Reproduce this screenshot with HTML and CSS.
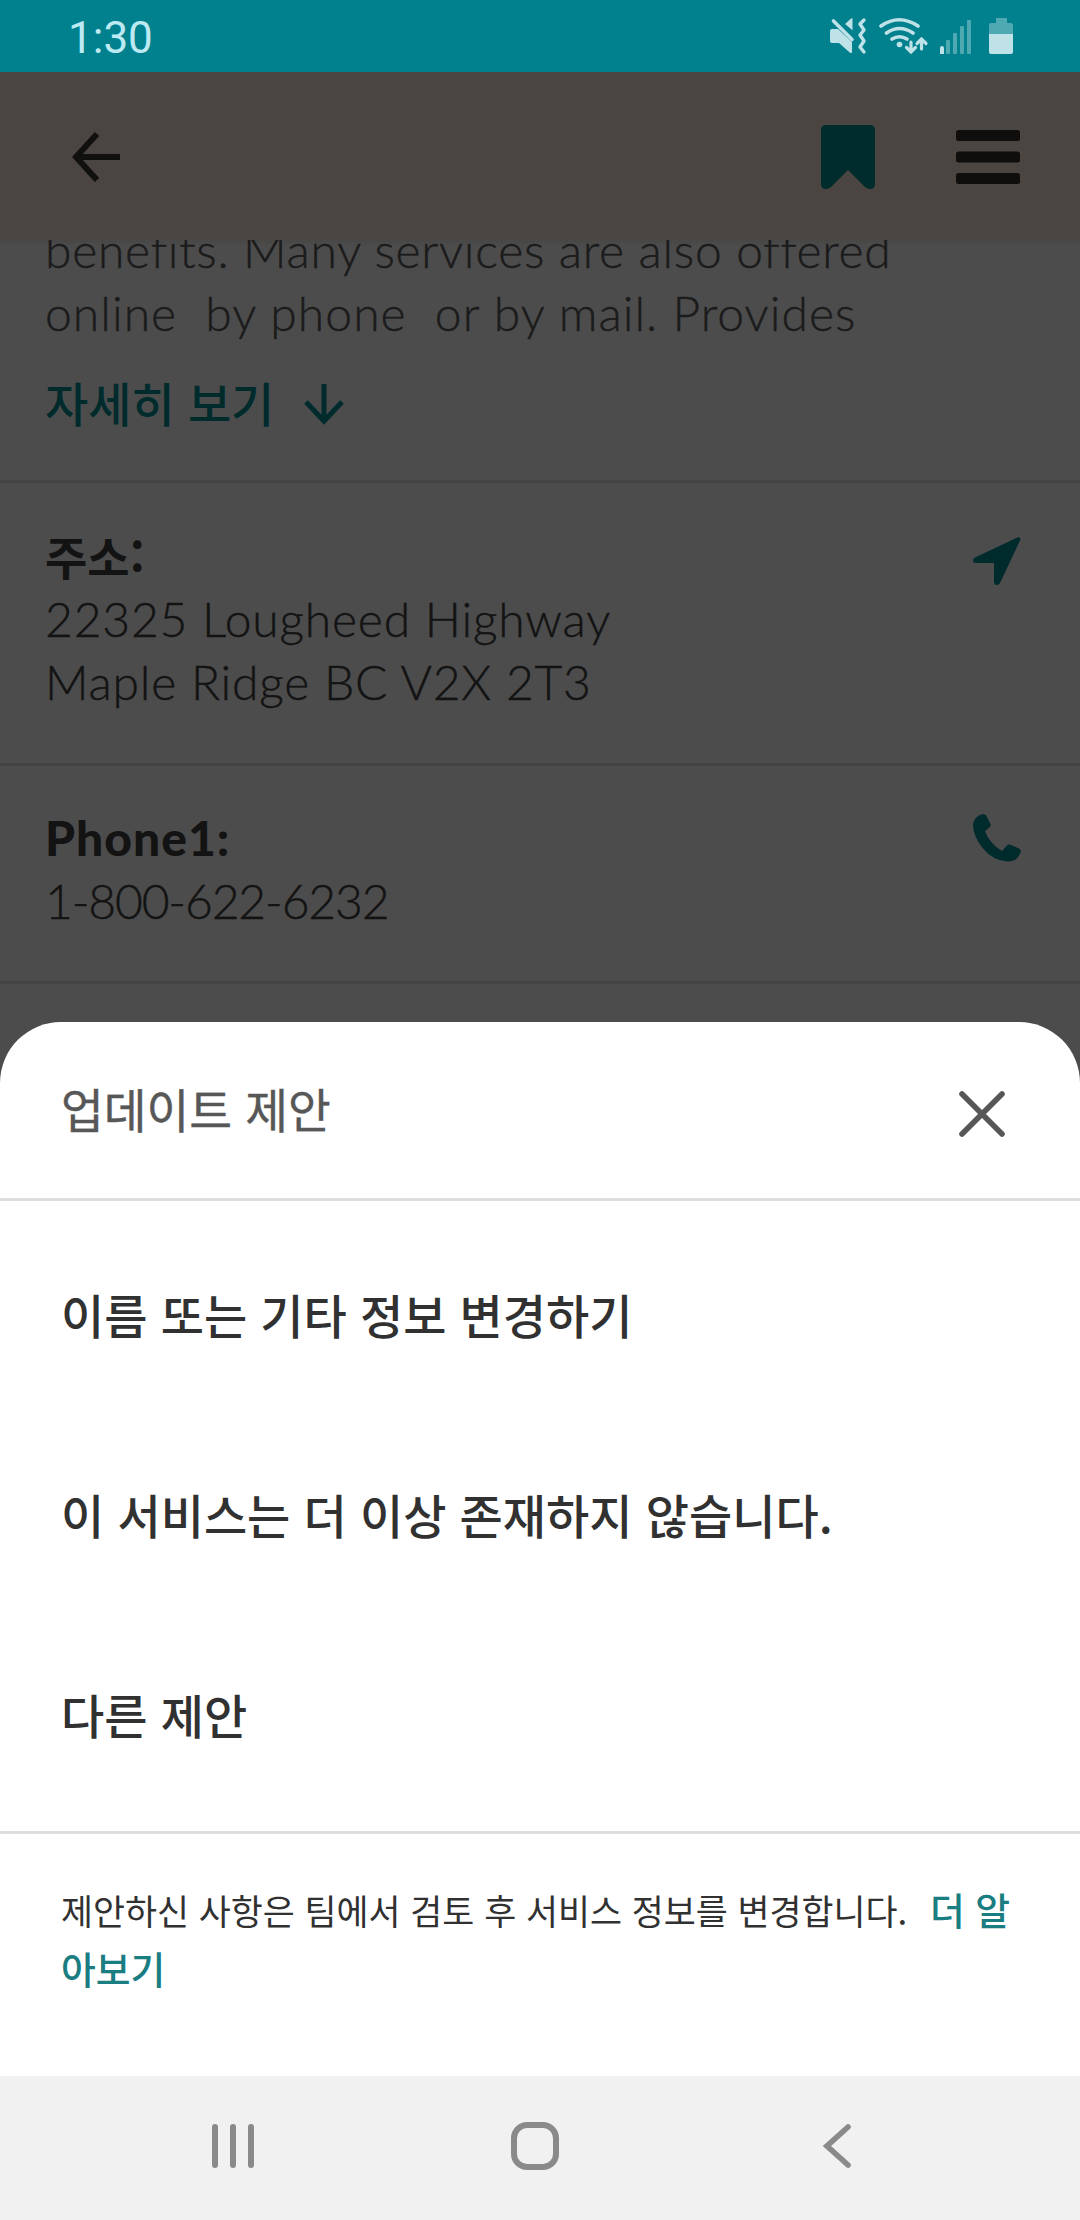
FILE: index.html
```html
<!DOCTYPE html>
<html lang="ko">
<head>
<meta charset="utf-8">
<title>업데이트 제안</title>
<link rel="stylesheet" href="styles.css">
</head>
<body>
<div class="screen">
  <div class="status">
    <span class="clock">1:30</span>
    <svg class="status-icons" width="184" height="38" viewBox="829 17 184 38">
      <g fill="#bfe1e8">
        <path d="M832 29h6l14 13v10c0 1-1 1.500-2 .7L839 43h-7a2 2 0 0 1-2-2V31a2 2 0 0 1 2-2zM845 24l6-5.500c1-.7 1.500-.3 1.500.7v11z"/>
        <circle cx="899.500" cy="44.500" r="2.800"/>
        <path d="M940 48q0-2 2-2t2 2v6h-4z"/>
        <path d="M989 34h24v18q0 2-2 2h-20q-2 0-2-2z"/>
      </g>
      <g fill="none" stroke="#bfe1e8" stroke-width="3.600" stroke-linecap="round">
        <path d="M833.500 21L852 39.500"/>
        <path d="M864 20l-4 4 4 6-4 5 4 6-4 6 4 5" stroke-linejoin="round" stroke-width="3.400"/>
        <path d="M881 26q18-12.500 37 0M886.500 33q13-9 26.500 0M892 39q7.500-4.500 15 0"/>
        <path d="M911 42v9M906.500 47.500l4.500 4.500 4.500-4.500M921.500 49v-9M917 43.500l4.500-4.500 4.500 4.500" stroke-width="3.200"/>
      </g>
      <g fill="#4fa9b2">
        <rect x="946" y="40" width="4" height="14" rx="1"/>
        <rect x="953" y="33" width="4" height="21" rx="1"/>
        <rect x="960" y="26" width="4" height="28" rx="1"/>
        <rect x="967" y="20" width="4" height="34" rx="1"/>
        <path d="M996 18h11v5h4q2 0 2 2v9h-24v-9q0-2 2-2h5z"/>
      </g>
    </svg>
  </div>

  <div class="appbar">
    <svg class="back" width="48" height="50" viewBox="0 0 48 50"><path d="M25 2L4 25l21 23M4 25h44" fill="none" stroke="#10100f" stroke-width="6"/></svg>
    <svg class="bookmark" width="54" height="64" viewBox="0 0 54 64"><path d="M5 0h44q5 0 5 5v54q0 5-5 5-3 0-5-2L27 45 10 62q-2 2-5 2-5 0-5-5V5q0-5 5-5z" fill="#002b2c"/></svg>
    <svg width="64" height="54" viewBox="0 0 64 54" fill="#0f0e0d"><rect width="64" height="11" rx="2.500"/><rect y="21.500" width="64" height="11" rx="2.500"/><rect y="43" width="64" height="11" rx="2.500"/></svg>
  </div>

  <div class="page">
    <section class="block about">
      <div class="about-text">
        <p class="line l1">benefits. Many services are also offered</p>
        <p class="line l2">online&nbsp; by phone&nbsp; or by mail. Provides</p>
      </div>
      <div class="more"><span>자세히 보기</span>
        <svg width="40" height="42" viewBox="0 0 40 42"><path d="M20 1v37M2 19l18 19 18-19" fill="none" stroke="#002b2c" stroke-width="5"/></svg>
      </div>
    </section>
    <section class="block address">
      <div>
        <h3 class="label ko">주소:</h3>
        <p class="line l3">22325 Lougheed Highway</p>
        <p class="line l4">Maple Ridge BC V2X 2T3</p>
      </div>
      <svg width="48" height="48" viewBox="0 0 48 48"><path d="M44.500.5Q48-.5 47.300 3L27 46q-1 2-3.500 2-2.500 0-2.500-3V26H3q-3 0-3-2.500Q0 21.500 2 20.500z" fill="#002b2c"/></svg>
    </section>
    <section class="block phone">
      <div>
        <h3 class="label en">Phone1:</h3>
        <p class="line l5">1-800-622-6232</p>
      </div>
      <svg width="48" height="48" viewBox="0 0 48 48"><path d="M6 1.500Q10-.7 13 1l4.500 9q.8 2-1 3.200L12 17q4 12 17 20l5-5.500q1.500-1.500 3.500-.8L46 34.500q2.500 1.500 1.600 4Q44 48 34 47.500 20 46.500 9.500 34 0 22 0 10.500 1 4 6 1.500z" fill="#002b2c"/></svg>
    </section>
  </div>

  <div class="sheet">
    <div class="sheet-head">
      <h2>업데이트 제안</h2>
      <svg width="46" height="46" viewBox="0 0 46 46"><path d="M3 3l40 40M43 3L3 43" fill="none" stroke="#575757" stroke-width="5.600" stroke-linecap="round"/></svg>
    </div>
    <ul class="options">
      <li>이름 또는 기타 정보 변경하기</li>
      <li>이 서비스는 더 이상 존재하지 않습니다.</li>
      <li>다른 제안</li>
    </ul>
    <p class="note">제안하신 사항은 팀에서 검토 후 서비스 정보를 변경합니다. <a>더 알<br>아보기</a></p>
  </div>

  <div class="navbar">
    <svg width="42" height="48" viewBox="0 0 42 48"><path d="M3 5v38M21 5v38M39 5v38" stroke="#8a8a8a" stroke-width="6" stroke-linecap="round"/></svg>
    <svg class="home" width="48" height="48" viewBox="0 0 48 48"><rect x="3" y="3" width="42" height="42" rx="13" fill="none" stroke="#8a8a8a" stroke-width="6"/></svg>
    <svg class="prev" width="28" height="48" viewBox="0 0 28 48"><path d="M25 5L4 24l21 19" fill="none" stroke="#8a8a8a" stroke-width="5.600" stroke-linecap="round"/></svg>
  </div>
</div>
</body>
</html>
```
FILE: styles.css
```css
* { box-sizing: border-box; margin: 0; padding: 0; }
body { font-family: Lato, "Noto Sans CJK KR", sans-serif; background: #fff; }
svg { display: block; flex: none; }
.screen { width: 1080px; height: 2220px; display: flex; flex-direction: column; overflow: hidden; background: #4c4c4c; }

.status { height: 72px; flex: none; background: #00818d; display: flex; justify-content: space-between; align-items: center; padding: 0 67px 0 68px; }
.clock { font: 44px/72px Roboto, sans-serif; color: #bdeaf2; padding-top: 3px; }

.appbar { height: 168px; flex: none; background: #4a4541; display: flex; align-items: center; padding: 2px 60px 0 72px; }
.bookmark { margin-left: auto; margin-right: 81px; }

.page { flex: none; height: 782px; overflow: hidden; color: #131313; background: linear-gradient(#484746, #4c4c4c 6px); }
.block { border-bottom: 3px solid #434343; padding: 0 59px 0 45px; display: flex; justify-content: space-between; }
.line { font-weight: 300; font-size: 48px; line-height: 63px; white-space: nowrap; -webkit-text-stroke: .4px; }
.l1 { letter-spacing: .72px; }
.l2 { letter-spacing: 1.05px; }
.l3, .l4 { letter-spacing: .8px; }
.l5 { letter-spacing: -1.15px; }
.about { height: 243px; flex-direction: column; justify-content: flex-start; color: #1b1b1b; }
.about-text { margin-top: -22px; }
.more { display: flex; align-items: center; gap: 30px; height: 63px; margin-top: 26px; color: #002b2c; font: 500 47px/63px "Noto Sans CJK KR", sans-serif; }
.more svg { margin-top: 5px; }
.address { height: 283px; padding-top: 41px; }
.address svg { margin-top: 13px; }
.phone { height: 218px; padding-top: 40px; }
.phone svg { margin-top: 8px; }
.label { font-size: 48px; line-height: 63px; font-weight: 900; white-space: nowrap; }
.label.en { letter-spacing: 1px; }
.label.ko { font-family: "Noto Sans CJK KR", sans-serif; font-size: 46px; font-weight: 700; }

.sheet { height: 1054px; flex: none; background: #fff; border-radius: 61px 61px 0 0; font-family: "Noto Sans CJK KR", sans-serif; }
.sheet-head { height: 179px; border-bottom: 3px solid #dedede; display: flex; justify-content: space-between; align-items: center; padding: 8px 75px 0 61px; }
.sheet-head h2 { font-size: 46.500px; line-height: 60px; font-weight: 400; color: #575757; margin-top: -12px; -webkit-text-stroke: .4px; }
.options { list-style: none; height: 633px; border-bottom: 3px solid #dedede; padding: 13px 61px 0; }
.options li { height: 200px; line-height: 200px; font-size: 47px; font-weight: 500; color: #313131; white-space: nowrap; }
.note { font-size: 34.800px; line-height: 58px; color: #313131; padding: 46px 0 0 61px; white-space: nowrap; }
.note a { font-size: 37.800px; font-weight: 500; color: #1a7d82; margin-left: 13px; }

.navbar { height: 144px; flex: none; background: #f1f1f1; display: flex; align-items: center; padding: 0 229px 4px 212px; justify-content: space-between; }
.home { margin-left: -7px; }
```
